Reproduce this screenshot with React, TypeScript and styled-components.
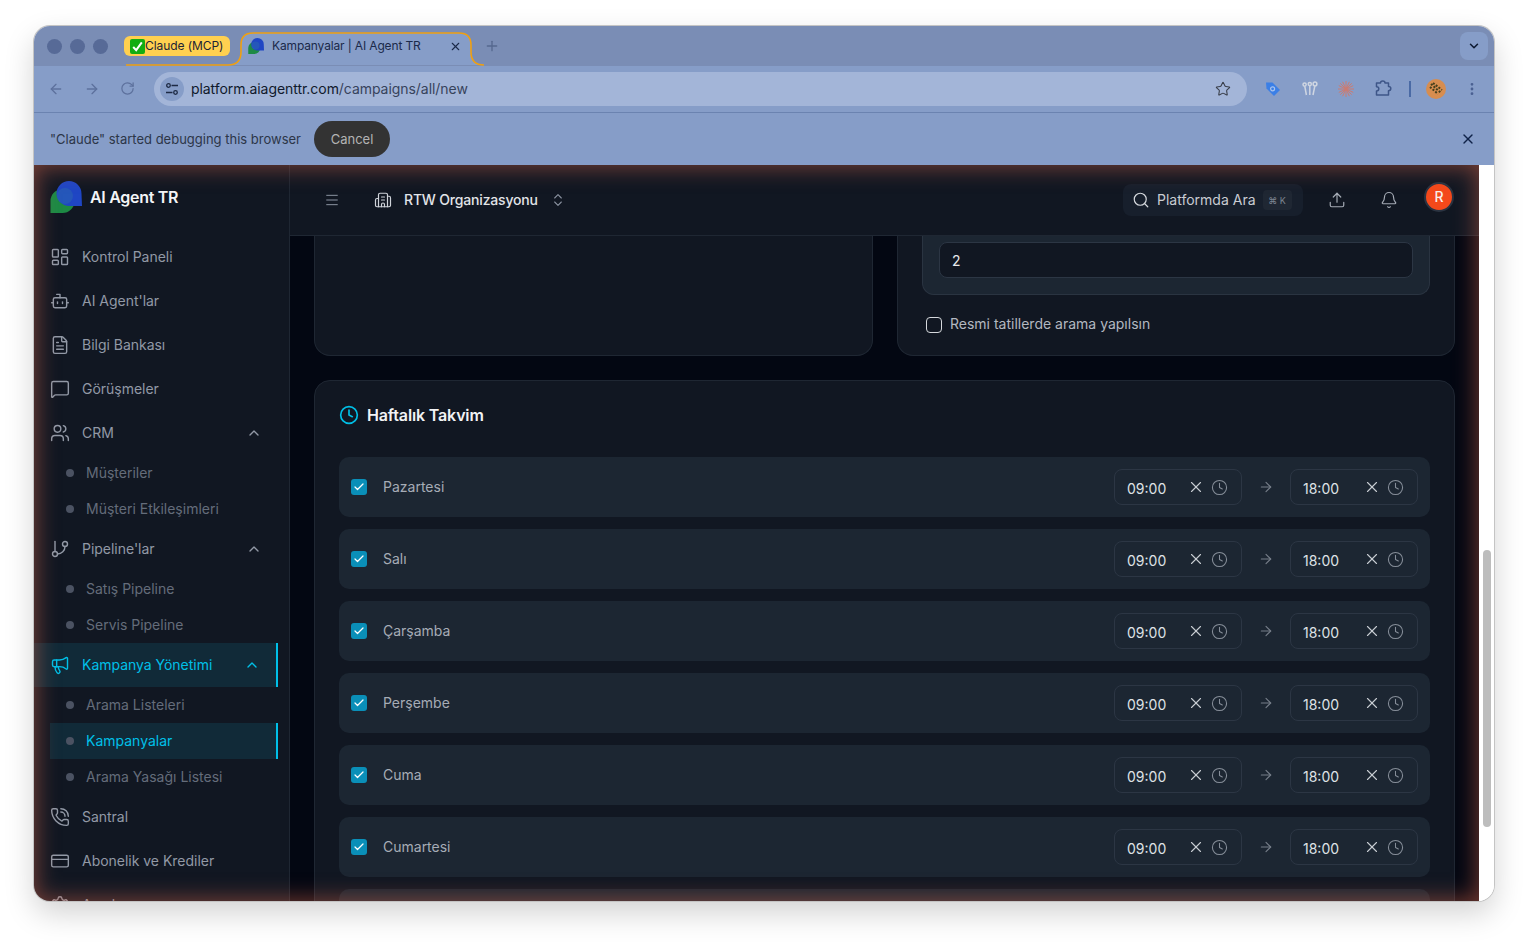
import styled, { createGlobalStyle } from 'styled-components';
import {
  ArrowLeft,
  ArrowRight,
  Bell,
  Bot,
  Building2,
  Check,
  ChevronDown,
  ChevronUp,
  ChevronsUpDown,
  Clock,
  CreditCard,
  EllipsisVertical,
  FileText,
  GitBranch,
  LayoutDashboard,
  Megaphone,
  Menu,
  MessageSquare,
  PhoneCall,
  Plus,
  RotateCw,
  Search,
  Settings,
  Star,
  Upload,
  Users,
  X,
} from 'lucide-react';

const days = ['Pazartesi', 'Salı', 'Çarşamba', 'Perşembe', 'Cuma', 'Cumartesi', 'Pazar'];

function Logo({ size }: { size: number }) {
  return (
    <svg width={size} height={size} viewBox="0 0 32 32">
      <path d="M0.5 32 V20 A12 12 0 1 1 12.5 32 Z" fill="#1d8a45" />
      <path d="M32 25 H19 A12.5 12.5 0 1 1 31.5 12.5 Z" fill="#1f46c4" />
      <circle cx="15" cy="15" r="8" fill="#2a62b4" opacity="0.6" />
    </svg>
  );
}

function TimeField({ value }: { value: string }) {
  return (
    <TimeBox>
      <TimeValue>{value}</TimeValue>
      <X size={18} color="#c9cdd3" strokeWidth={1.5} />
      <Clock size={17} color="#868e99" strokeWidth={1.5} />
    </TimeBox>
  );
}

export default function App() {
  return (
    <>
      <GlobalStyle />
      <Window>
        <TabStrip>
          <TabOutline width="1460" height="40" viewBox="0 0 1460 40">
            <path d="M194 39 Q207 39 207 26 V19 Q207 7 219 7 H425 Q437 7 437 19 V26 Q437 39 450 39 Z" fill="#869dc8" />
            <path
              d="M92 39 H194 Q207 39 207 26 V19 Q207 7 219 7 H425 Q437 7 437 19 V26 Q437 39 450 39"
              fill="none"
              stroke="#f0a010"
              strokeWidth="1.6"
            />
          </TabOutline>
          <Lights>
            <Light />
            <Light />
            <Light />
          </Lights>
          <GroupPill>
            <svg width="15" height="15" viewBox="0 0 15 15">
              <rect width="15" height="15" rx="2" fill="#12ad12" />
              <path d="M3.2 8 L6.2 11.2 L11.8 3.4" fill="none" stroke="#fff" strokeWidth="2" />
            </svg>
            Claude (MCP)
          </GroupPill>
          <ActiveTab>
            <Logo size={16} />
            <TabTitle>Kampanyalar | AI Agent TR</TabTitle>
            <X size={13} color="#1b2a4a" strokeWidth={2} />
          </ActiveTab>
          <NewTab>
            <Plus size={16} color="#56688f" strokeWidth={2} />
          </NewTab>
          <TabSearch>
            <ChevronDown size={14} color="#0f1b33" strokeWidth={2.6} />
          </TabSearch>
        </TabStrip>

        <Toolbar>
          <NavIcons>
            <ArrowLeft size={16} color="#5d719d" />
            <ArrowRight size={16} color="#5d719d" />
            <RotateCw size={15} color="#5d719d" />
          </NavIcons>
          <UrlBar>
            <TuneBadge>
              <svg width="14" height="14" viewBox="0 0 14 14" fill="none" stroke="#1d2a44" strokeWidth="1.3">
                <circle cx="3.5" cy="3.5" r="1.8" />
                <path d="M6.5 3.5 H13" />
                <circle cx="10.5" cy="10.5" r="1.8" />
                <path d="M1 10.5 H7.5" />
              </svg>
            </TuneBadge>
            <UrlText>
              platform.aiagenttr.com<UrlPath>/campaigns/all/new</UrlPath>
            </UrlText>
            <Star size={16} color="#3a3f4a" strokeWidth={1.6} />
          </UrlBar>
          <Extensions>
            <ExtSlot>
              <svg width="16" height="16" viewBox="0 0 16 16">
                <path d="M1 1.5 H7.5 L15 9 L9 15 L1.5 7.5 Z" fill="#3b7fe6" />
                <circle cx="7.6" cy="7.8" r="2" fill="none" stroke="#a9c4ee" strokeWidth="1.2" />
              </svg>
            </ExtSlot>
            <ExtSlot>
              <svg width="16" height="16" viewBox="0 0 16 16" fill="none" stroke="#cfd6e2" strokeWidth="1.5">
                <circle cx="2.6" cy="3.6" r="1.6" />
                <path d="M2.8 5.5 L4.4 14" />
                <circle cx="7.8" cy="3" r="1.6" />
                <path d="M7.8 5 V14" />
                <circle cx="13" cy="3" r="1.9" />
                <path d="M12.8 5.2 L11 14" />
              </svg>
            </ExtSlot>
            <ExtSlot>
              <svg width="16" height="16" viewBox="0 0 16 16" stroke="#cc7b70" strokeWidth="1">
                <path d="M8 0 V16 M0 8 H16 M2.3 2.3 L13.7 13.7 M13.7 2.3 L2.3 13.7 M4.6 .8 L11.4 15.2 M11.4 .8 L4.6 15.2 M.8 4.6 L15.2 11.4 M15.2 4.6 L.8 11.4" />
              </svg>
            </ExtSlot>
            <ExtSlot>
              <svg width="17" height="17" viewBox="0 0 17 17" fill="none" stroke="#3e5688" strokeWidth="1.5">
                <path d="M1.5 3 H5.5 Q5.5 1 7.8 1 Q10 1 10 3 H13.5 V6.5 Q15.8 6.5 15.8 8.6 Q15.8 10.7 13.5 10.7 V15 H1.5 V11 Q3.8 11 3.8 8.8 Q3.8 6.8 1.5 6.8 Z" strokeLinejoin="round" />
              </svg>
            </ExtSlot>
            <ExtDivider />
            <ProfileSlot>
              <svg width="20" height="20" viewBox="0 0 20 20">
                <circle cx="10" cy="10" r="10" fill="#d78d4f" />
                <path d="M5 5 L15 14 M7 4 L16 11 M4 8 L12 15" stroke="#46401c" strokeWidth="2" strokeDasharray="2 1.5" />
              </svg>
            </ProfileSlot>
            <EllipsisVertical size={16} color="#4a6092" strokeWidth={2.2} />
          </Extensions>
        </Toolbar>

        <InfoBar>
          <InfoText>"Claude" started debugging this browser</InfoText>
          <CancelButton>Cancel</CancelButton>
          <InfoClose>
            <X size={16} color="#0f2248" strokeWidth={2} />
          </InfoClose>
        </InfoBar>

        <Content>
          <Viewport>
            <Sidebar>
              <Brand>
                <Logo size={32} />
                <BrandName>AI Agent TR</BrandName>
              </Brand>
              <NavItem>
                <LayoutDashboard size={20} strokeWidth={1.7} />
                <NavLabel>Kontrol Paneli</NavLabel>
              </NavItem>
              <NavItem>
                <Bot size={20} strokeWidth={1.7} />
                <NavLabel>AI Agent'lar</NavLabel>
              </NavItem>
              <NavItem>
                <FileText size={20} strokeWidth={1.7} />
                <NavLabel>Bilgi Bankası</NavLabel>
              </NavItem>
              <NavItem>
                <MessageSquare size={20} strokeWidth={1.7} />
                <NavLabel>Görüşmeler</NavLabel>
              </NavItem>
              <NavItem>
                <Users size={20} strokeWidth={1.7} />
                <NavLabel>CRM</NavLabel>
                <ChevronUp size={16} />
              </NavItem>
              <SubItem>
                <Dot />
                <SubLabel>Müşteriler</SubLabel>
              </SubItem>
              <SubItem>
                <Dot />
                <SubLabel>Müşteri Etkileşimleri</SubLabel>
              </SubItem>
              <NavItem>
                <GitBranch size={20} strokeWidth={1.7} />
                <NavLabel>Pipeline'lar</NavLabel>
                <ChevronUp size={16} />
              </NavItem>
              <SubItem>
                <Dot />
                <SubLabel>Satış Pipeline</SubLabel>
              </SubItem>
              <SubItem>
                <Dot />
                <SubLabel>Servis Pipeline</SubLabel>
              </SubItem>
              <NavItem $active>
                <Megaphone size={20} strokeWidth={1.7} />
                <NavLabel>Kampanya Yönetimi</NavLabel>
                <ChevronUp size={16} />
              </NavItem>
              <SubItem>
                <Dot />
                <SubLabel>Arama Listeleri</SubLabel>
              </SubItem>
              <SubItem $active>
                <Dot />
                <SubLabel>Kampanyalar</SubLabel>
              </SubItem>
              <SubItem>
                <Dot />
                <SubLabel>Arama Yasağı Listesi</SubLabel>
              </SubItem>
              <NavItem>
                <PhoneCall size={20} strokeWidth={1.7} />
                <NavLabel>Santral</NavLabel>
              </NavItem>
              <NavItem>
                <CreditCard size={20} strokeWidth={1.7} />
                <NavLabel>Abonelik ve Krediler</NavLabel>
              </NavItem>
              <NavItem>
                <Settings size={20} strokeWidth={1.7} />
                <NavLabel>Ayarlar</NavLabel>
              </NavItem>
            </Sidebar>

            <Main>
              <Header>
                <Menu size={16} color="#8b93a1" strokeWidth={1.5} />
                <OrgSwitch>
                  <Building2 size={18} color="#d0d4da" strokeWidth={1.6} />
                  <OrgName>RTW Organizasyonu</OrgName>
                  <ChevronsUpDown size={16} color="#8b93a1" strokeWidth={1.6} />
                </OrgSwitch>
                <SearchBox>
                  <Search size={18} color="#d5d8dd" strokeWidth={1.6} />
                  <SearchLabel>Platformda Ara</SearchLabel>
                  <Kbd>⌘ K</Kbd>
                </SearchBox>
                <HeaderAction>
                  <Upload size={18} color="#a5abb5" strokeWidth={1.6} />
                </HeaderAction>
                <HeaderAction>
                  <Bell size={18} color="#a5abb5" strokeWidth={1.6} />
                </HeaderAction>
                <Avatar>R</Avatar>
              </Header>

              <Body>
                <TopCards>
                  <CutCard />
                  <CutCard>
                    <RetryPanel>
                      <NumberInput>2</NumberInput>
                    </RetryPanel>
                    <HolidayRow>
                      <EmptyCheck />
                      <HolidayLabel>Resmi tatillerde arama yapılsın</HolidayLabel>
                    </HolidayRow>
                  </CutCard>
                </TopCards>

                <ScheduleCard>
                  <ScheduleTitle>
                    <Clock size={20} color="#00bfe6" strokeWidth={2} />
                    Haftalık Takvim
                  </ScheduleTitle>
                  <DayList>
                    {days.map((day) => (
                      <DayRow key={day}>
                        <DayCheck>
                          <Check size={12} color="#fff" strokeWidth={2.5} />
                        </DayCheck>
                        <DayName>{day}</DayName>
                        <TimeField value="09:00" />
                        <ArrowRight size={16} color="#767e89" strokeWidth={1.7} />
                        <TimeField value="18:00" />
                      </DayRow>
                    ))}
                  </DayList>
                </ScheduleCard>
              </Body>
            </Main>
            <Glow />
          </Viewport>
          <ScrollStrip>
            <ScrollThumb />
          </ScrollStrip>
        </Content>
      </Window>
    </>
  );
}

const GlobalStyle = createGlobalStyle`
  * {
    box-sizing: border-box;
  }
  html, body {
    margin: 0;
    height: 100%;
    background: #ffffff;
    overflow: hidden;
  }
  body {
    padding: 26px 34px 42px;
    font-family: Inter, "Noto Sans", "DejaVu Sans", sans-serif;
  }
  #root {
    height: 100%;
  }
`;

const Window = styled.div`
  width: 1460px;
  height: 875px;
  border-radius: 16px;
  overflow: hidden;
  display: flex;
  flex-direction: column;
  background: #fff;
  box-shadow: 0 0 0 1px #c4c4c4, 0 12px 30px rgba(0, 0, 0, 0.18);
`;

const TabStrip = styled.div`
  position: relative;
  height: 40px;
  flex: none;
  display: flex;
  align-items: center;
  background: #7a8db5;
  padding: 0 6px 0 13px;
`;

const TabOutline = styled.svg`
  position: absolute;
  left: 0;
  top: 0;
`;

const Lights = styled.div`
  display: flex;
  gap: 8px;
  margin-right: 16px;
`;

const Light = styled.span`
  width: 15px;
  height: 15px;
  border-radius: 50%;
  background: #576a97;
`;

const GroupPill = styled.div`
  width: 106px;
  height: 20px;
  border-radius: 6px;
  background: #ffd050;
  color: #1d2435;
  font-size: 12px;
  letter-spacing: -0.08px;
  line-height: 20px;
  display: flex;
  align-items: center;
  padding-left: 6px;
  position: relative;
`;

const ActiveTab = styled.div`
  position: relative;
  width: 226px;
  margin-left: 18px;
  display: flex;
  align-items: center;
  padding-right: 12px;
`;

const TabTitle = styled.span`
  flex: 1;
  margin-left: 8px;
  font-size: 12px;
  letter-spacing: -0.14px;
  color: #1b2a4a;
  white-space: nowrap;
  padding-bottom: 1px;
`;

const NewTab = styled.div`
  position: relative;
  margin-left: 10px;
  display: flex;
`;

const TabSearch = styled.div`
  margin-left: auto;
  width: 28px;
  height: 28px;
  border-radius: 8px;
  background: #869dc8;
  display: flex;
  align-items: center;
  justify-content: center;
`;

const Toolbar = styled.div`
  height: 47px;
  flex: none;
  display: flex;
  align-items: center;
  padding: 0 14px 1px 14px;
  background: #869dc8;
  border-bottom: 1px solid #6b83b0;
`;

const NavIcons = styled.div`
  width: 106px;
  display: flex;
  gap: 20px;
  align-items: center;
`;

const UrlBar = styled.div`
  width: 1094px;
  height: 34px;
  border-radius: 17px;
  background: #a3b5d8;
  display: flex;
  align-items: center;
  padding: 0 16px 0 6px;
`;

const TuneBadge = styled.div`
  width: 24px;
  height: 24px;
  border-radius: 50%;
  background: #869dc8;
  display: flex;
  align-items: center;
  justify-content: center;
`;

const UrlText = styled.div`
  flex: 1;
  margin-left: 7px;
  font-size: 14px;
  letter-spacing: -0.05px;
  color: #10192c;
`;

const UrlPath = styled.span`
  color: #37435c;
`;

const Extensions = styled.div`
  flex: 1;
  display: flex;
  align-items: center;
  padding-left: 18px;
`;

const ExtSlot = styled.div`
  width: 36.5px;
  display: flex;
`;

const ExtDivider = styled.span`
  width: 2px;
  height: 16px;
  background: #4a6aa5;
  margin-right: 15px;
  margin-left: -2px;
`;

const ProfileSlot = styled.div`
  width: 38px;
  display: flex;
`;

const InfoBar = styled.div`
  height: 52px;
  flex: none;
  display: flex;
  align-items: center;
  padding: 0 18px 0 16px;
  background: #869dc8;
`;

const InfoText = styled.span`
  font-size: 13px;
  color: #2c3648;
`;

const CancelButton = styled.div`
  margin-left: 13px;
  width: 76px;
  height: 36px;
  border-radius: 18px;
  background: #333333;
  color: #b4b4b4;
  font-size: 13px;
  display: flex;
  align-items: center;
  justify-content: center;
`;

const InfoClose = styled.div`
  margin-left: auto;
  display: flex;
`;

const Content = styled.div`
  flex: 1;
  min-height: 0;
  display: flex;
`;

const Viewport = styled.div`
  position: relative;
  width: 1445px;
  display: flex;
  overflow: hidden;
`;

const Glow = styled.div`
  position: absolute;
  inset: 0;
  pointer-events: none;
  box-shadow: inset 0 0 22px 2px rgba(225, 105, 75, 0.5);
`;

const ScrollStrip = styled.div`
  flex: 1;
  background: #ffffff;
  padding: 385px 3px 0 4px;
`;

const ScrollThumb = styled.div`
  height: 277px;
  border-radius: 4px;
  background: #bdbdbd;
`;

const Sidebar = styled.aside`
  width: 256px;
  flex: none;
  background: #111722;
  border-right: 1px solid #1f2733;
  overflow: hidden;
`;

const Brand = styled.div`
  height: 70px;
  display: flex;
  align-items: center;
  gap: 8px;
  padding: 0 0 6px 16px;
`;

const BrandName = styled.span`
  font-size: 16px;
  font-weight: 600;
  letter-spacing: -0.3px;
  color: #f4f5f7;
`;

const NavItem = styled.div<{ $active?: boolean }>`
  height: 44px;
  margin-right: 11px;
  padding: 0 16px;
  display: flex;
  align-items: center;
  gap: 12px;
  font-size: 14px;
  color: ${(p) => (p.$active ? '#00c0e8' : '#9299a6')};
  background: ${(p) => (p.$active ? '#112a38' : 'transparent')};
  border-right: ${(p) => (p.$active ? '2px solid #00c0e8' : 'none')};
  svg {
    flex: none;
  }
`;

const NavLabel = styled.span`
  flex: 1;
  white-space: nowrap;
  padding-bottom: 2px;
  letter-spacing: -0.02px;
`;

const SubItem = styled.div<{ $active?: boolean }>`
  height: 36px;
  margin: 0 11px 0 16px;
  padding-left: 16px;
  display: flex;
  align-items: center;
  gap: 12px;
  font-size: 14px;
  color: ${(p) => (p.$active ? '#00c0e8' : '#646c7a')};
  background: ${(p) => (p.$active ? '#112a38' : 'transparent')};
  border-right: ${(p) => (p.$active ? '2px solid #00c0e8' : 'none')};
`;

const SubLabel = styled.span`
  padding-bottom: 2px;
`;

const Dot = styled.span`
  width: 8px;
  height: 8px;
  border-radius: 50%;
  background: #4b5262;
`;

const Main = styled.div`
  flex: 1;
  min-width: 0;
  display: flex;
  flex-direction: column;
  background: #030712;
`;

const Header = styled.header`
  height: 71px;
  flex: none;
  display: flex;
  align-items: center;
  padding: 0 25px 0 34px;
  background: #111722;
  border-bottom: 1px solid #1f2733;
`;

const OrgSwitch = styled.div`
  margin-left: 34px;
  flex: 1;
  display: flex;
  align-items: center;
  gap: 12px;
`;

const OrgName = styled.span`
  font-size: 14px;
  font-weight: 500;
  letter-spacing: -0.18px;
  color: #e2e4e8;
  padding-bottom: 2px;
`;

const SearchBox = styled.div`
  width: 180px;
  height: 32px;
  border-radius: 8px;
  background: #171f2c;
  display: flex;
  align-items: center;
  gap: 7px;
  padding: 0 10px 0 9px;
  margin-right: 17px;
`;

const SearchLabel = styled.span`
  font-size: 14px;
  color: #c9ccd2;
  white-space: nowrap;
  padding-bottom: 2px;
`;

const Kbd = styled.span`
  height: 20px;
  width: 29px;
  flex: none;
  border-radius: 4px;
  background: #1f2733;
  color: #7d8591;
  font-size: 9px;
  display: flex;
  align-items: center;
  justify-content: center;
`;

const HeaderAction = styled.div`
  width: 34px;
  margin-right: 18px;
  display: flex;
  justify-content: center;
`;

const Avatar = styled.div`
  width: 30px;
  height: 30px;
  flex: none;
  margin-left: 0;
  margin-top: -7px;
  border-radius: 50%;
  background: #f4491b;
  border: 2px solid #2a3341;
  color: #f8f0ec;
  font-size: 14px;
  font-weight: 500;
  display: flex;
  align-items: center;
  justify-content: center;
`;

const Body = styled.div`
  flex: 1;
  min-height: 0;
  overflow: hidden;
  padding: 0 24px;
  display: flex;
  flex-direction: column;
  gap: 24px;
`;

const TopCards = styled.div`
  display: grid;
  grid-template-columns: 559px 558px;
  gap: 24px;
  flex: none;
`;

const CutCard = styled.section`
  height: 120px;
  background: #111722;
  border: 1px solid #1f2733;
  border-top: none;
  border-radius: 0 0 16px 16px;
  padding: 0 24px;
`;

const RetryPanel = styled.div`
  height: 59px;
  padding: 6px 16px 0;
  background: #1c2632;
  border: 1px solid #2a3441;
  border-top: none;
  border-radius: 0 0 12px 12px;
`;

const NumberInput = styled.div`
  height: 36px;
  padding: 0 12px;
  background: #111722;
  border: 1px solid #2c3644;
  border-radius: 8px;
  color: #e8eaed;
  font-size: 14px;
  display: flex;
  align-items: center;
`;

const HolidayRow = styled.label`
  margin: 20px 0 0 4px;
  display: flex;
  align-items: center;
  gap: 8px;
  font-size: 14px;
  color: #b3b8c0;
`;

const HolidayLabel = styled.span`
  padding-bottom: 3px;
`;

const EmptyCheck = styled.span`
  width: 16px;
  height: 16px;
  border: 1px solid #d5d8dc;
  border-radius: 4px;
`;

const ScheduleCard = styled.section`
  flex: none;
  background: #111722;
  border: 1px solid #1f2733;
  border-radius: 16px;
  padding: 24px;
`;

const ScheduleTitle = styled.h3`
  margin: 0 0 32px;
  height: 20px;
  display: flex;
  align-items: center;
  gap: 8px;
  font-size: 16px;
  font-weight: 600;
  letter-spacing: -0.15px;
  color: #f2f3f5;
`;

const DayList = styled.div`
  display: flex;
  flex-direction: column;
  gap: 12px;
`;

const DayRow = styled.div`
  height: 60px;
  padding: 0 12px;
  border-radius: 10px;
  background: #1c2632;
  display: flex;
  align-items: center;
  gap: 16px;
`;

const DayCheck = styled.span`
  width: 16px;
  height: 16px;
  border-radius: 3px;
  background: #0a8fb8;
  display: flex;
  align-items: center;
  justify-content: center;
`;

const DayName = styled.span`
  flex: 1;
  font-size: 14px;
  color: #a6acb6;
  padding-bottom: 2px;
`;

const TimeBox = styled.div`
  width: 128px;
  height: 36px;
  padding: 0 13px 0 12px;
  border: 1px solid #2c3644;
  border-radius: 8px;
  display: flex;
  align-items: center;
  gap: 6px;
`;

const TimeValue = styled.span`
  flex: 1;
  font-size: 14px;
  color: #dfe2e6;
  padding-top: 2px;
`;
